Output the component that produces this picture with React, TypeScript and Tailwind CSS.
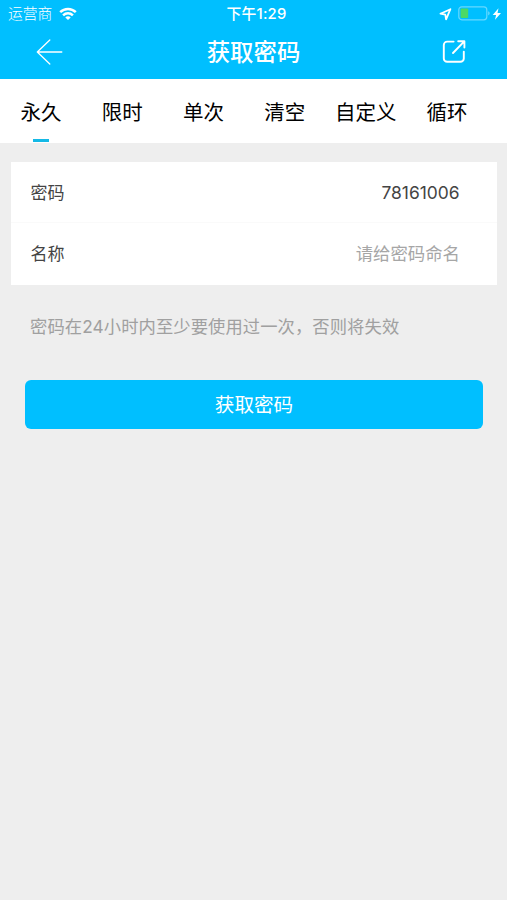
const tabs = ['永久', '限时', '单次', '清空', '自定义', '循环'];

function StatusBar() {
  return (
    <div className="relative flex h-7 items-center justify-between pl-2 pr-[5px] text-white">
      <div className="flex items-center gap-[7px]">
        <span className="text-[14.8px] leading-7 font-light">运营商</span>
        <svg width="18" height="14" viewBox="0 0 18 14" fill="none" stroke="white" strokeWidth="2.5">
          <path d="M1.2 5.2C5.6 .8 12.4 .8 16.8 5.2" />
          <path d="M4.1 8.3c2.8-2.7 7-2.7 9.8 0" />
          <path d="M9 13.1 6.3 10.4c1.5-1.4 3.9-1.4 5.4 0Z" fill="white" stroke="none" />
        </svg>
      </div>
      <span className="absolute left-1/2 -translate-x-1/2 ml-[3px] whitespace-nowrap text-[14.8px] leading-7 font-medium tracking-[0.2px]">
        下午1:29
      </span>
      <div className="flex items-center">
        <svg width="13" height="13" viewBox="0 0 13 13" fill="none" stroke="white" strokeWidth="1.8" strokeLinejoin="round">
          <path d="M11.4 1.2 1.4 5.7l4.9 1 .8 4.7Z" />
        </svg>
        <svg className="mb-[2px] ml-[6px]" width="33" height="15" viewBox="0 0 33 15" fill="none">
          <rect x=".8" y=".8" width="28" height="13" rx="3" stroke="white" strokeOpacity=".4" strokeWidth="1.2" />
          <rect x="2.6" y="2.6" width="7.6" height="9.4" rx="1" fill="#4cd964" />
          <path d="M30.3 5.2c1.7.6 1.7 3.6 0 4.2Z" fill="white" fillOpacity=".5" />
        </svg>
        <svg className="ml-[1px]" width="10" height="12" viewBox="0 0 10 12" fill="white">
          <path d="M6.5.3.7 7h3.4L3 11.7 9 5H5.5Z" />
        </svg>
      </div>
    </div>
  );
}

function NavBar() {
  return (
    <div className="flex h-[51px] items-center justify-between pl-9 pr-10 pb-[3px]">
      <svg width="27" height="28" viewBox="0 0 27 28" fill="none" stroke="white" strokeWidth="1.3" strokeLinecap="round" strokeLinejoin="round">
        <path d="M13.8 2 1.3 14l12.5 12M1.3 14h24.5" />
      </svg>
      <h1 className="pl-[2px] pt-px text-[23.4px] leading-none font-medium text-white">获取密码</h1>
      <svg className="mb-px" width="25" height="25" viewBox="0 0 25 25" fill="none" stroke="white" strokeWidth="1.9" strokeLinecap="round" strokeLinejoin="round">
        <path d="M11.6 2.6H5.2a3.4 3.4 0 0 0-3.4 3.4v13.4a3.4 3.4 0 0 0 3.4 3.4h13.2a3.4 3.4 0 0 0 3.4-3.4V12.6" />
        <path d="M11 14 22 2.6M16.2 2.2h6.2v6.4" />
      </svg>
    </div>
  );
}

export default function App() {
  return (
    <div className="min-h-[900px] w-full overflow-hidden bg-[#eeeeee] font-['Inter','Noto_Sans_CJK_SC',sans-serif]">
      <header className="bg-[#00bfff]">
        <StatusBar />
        <NavBar />
      </header>
      <nav className="flex h-16 bg-white pl-[0.5px] text-[20.5px] text-black">
        {tabs.map((tab, i) => (
          <div key={tab} className="flex w-[81.2px] shrink-0 flex-col items-center justify-between pt-5">
            <span className="leading-7 whitespace-nowrap">{tab}</span>
            {i === 0 && <span className="mb-[1px] h-[3px] w-4 bg-[#14b9e6]" />}
          </div>
        ))}
      </nav>
      <main>
        <section className="mx-[10.5px] mt-[19px] h-[123px] bg-white text-[17px] text-[#444444]">
          <div className="flex h-[60px] items-center justify-between pl-5 pr-[37px] pt-[2px]">
            <span className="pt-[2px]">密码</span>
            <span className="text-[17.4px]">78161006</span>
          </div>
          <div className="flex h-[63px] items-center justify-between border-t border-[#fafafa] pl-5 pr-[36.5px]">
            <span className="pt-[2px]">名称</span>
            <span className="text-[17.4px] leading-6 text-[#a6a6a6]">请给密码命名</span>
          </div>
        </section>
        <p className="mt-7 pl-[30px] text-[17.3px] leading-7 tracking-[0.1px] whitespace-nowrap text-[#a0a0a0]">
          密码在24小时内至少要使用过一次，否则将失效
        </p>
        <button className="mt-[39px] ml-[25px] flex h-[49px] w-[458px] items-center justify-center rounded-md bg-[#00bfff] pt-[3px] text-[19.6px] text-white">
          获取密码
        </button>
      </main>
    </div>
  );
}
